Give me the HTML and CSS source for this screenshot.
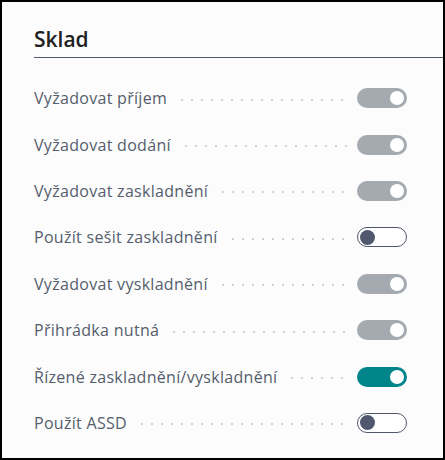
FILE: index.html
```html
<!DOCTYPE html>
<html lang="cs">
<head>
  <meta charset="UTF-8">
  <title>Sklad</title>
  <link rel="stylesheet" href="styles.css">
</head>
<body>

<section class="panel">
  <h2 class="panel-title">Sklad</h2>

  <div class="fields">
    <div class="field">
      <span class="field-label">Vyžadovat příjem</span>
      <span class="dots"></span>
      <span class="toggle toggle-disabled"></span>
    </div>
    <div class="field">
      <span class="field-label">Vyžadovat dodání</span>
      <span class="dots"></span>
      <span class="toggle toggle-disabled"></span>
    </div>
    <div class="field">
      <span class="field-label">Vyžadovat zaskladnění</span>
      <span class="dots"></span>
      <span class="toggle toggle-disabled"></span>
    </div>
    <div class="field">
      <span class="field-label">Použít sešit zaskladnění</span>
      <span class="dots"></span>
      <span class="toggle toggle-off"></span>
    </div>
    <div class="field">
      <span class="field-label">Vyžadovat vyskladnění</span>
      <span class="dots"></span>
      <span class="toggle toggle-disabled"></span>
    </div>
    <div class="field">
      <span class="field-label">Přihrádka nutná</span>
      <span class="dots"></span>
      <span class="toggle toggle-disabled"></span>
    </div>
    <div class="field">
      <span class="field-label">Řízené zaskladnění/vyskladnění</span>
      <span class="dots"></span>
      <span class="toggle toggle-on"></span>
    </div>
    <div class="field">
      <span class="field-label">Použít ASSD</span>
      <span class="dots"></span>
      <span class="toggle toggle-off"></span>
    </div>
  </div>
</section>

</body>
</html>
```

FILE: styles.css
```css
/* Basic reset */
body, html {
  margin: 0;
  padding: 0;
}

*, *::before, *::after {
  box-sizing: border-box;
}

body {
  font-family: 'Open Sans', 'Noto Sans', sans-serif;
  background: #ffffff;
}

/* Panel */
.panel {
  width: 445px;
  height: 460px;
  border: 2px solid #000000;
  background: #fcfcfc;
  padding-left: 32px;
}

.panel-title {
  margin: 0;
  padding-top: 22px;
  height: 56px;
  font-size: 21px;
  font-weight: 600;
  line-height: 30px;
  color: #212121;
  border-bottom: 1px solid #505a68;
}

/* Field rows */
.fields {
  padding-top: 17px;
  padding-right: 36px;
}

.field {
  display: flex;
  align-items: center;
  height: 46.4px;
}

.field-label {
  white-space: nowrap;
  font-size: 16px;
  letter-spacing: 0.3px;
  color: #555e6d;
}

.dots {
  flex: 1;
  height: 4px;
  margin: 3px 10px 0 10px;
  background-image: radial-gradient(circle, #cfd1d4 0.8px, transparent 1.2px);
  background-size: 10px 4px;
  background-repeat: repeat-x;
  background-position: left center;
}

/* Toggle switch */
.toggle {
  position: relative;
  flex: none;
  width: 50px;
  height: 20px;
  border-radius: 10px;
}

.toggle::after {
  content: "";
  position: absolute;
  top: 3px;
  width: 14px;
  height: 14px;
  border-radius: 50%;
}

.toggle-disabled {
  background: #a5aab1;
}

.toggle-disabled::after,
.toggle-on::after {
  right: 3px;
  background: #ffffff;
}

.toggle-on {
  background: #00858a;
}

.toggle-off {
  border: 1.5px solid #4f586b;
  background: #ffffff;
}

.toggle-off::after {
  top: 1.5px;
  left: 2px;
  width: 15px;
  height: 15px;
  background: #4f586e;
}
```
